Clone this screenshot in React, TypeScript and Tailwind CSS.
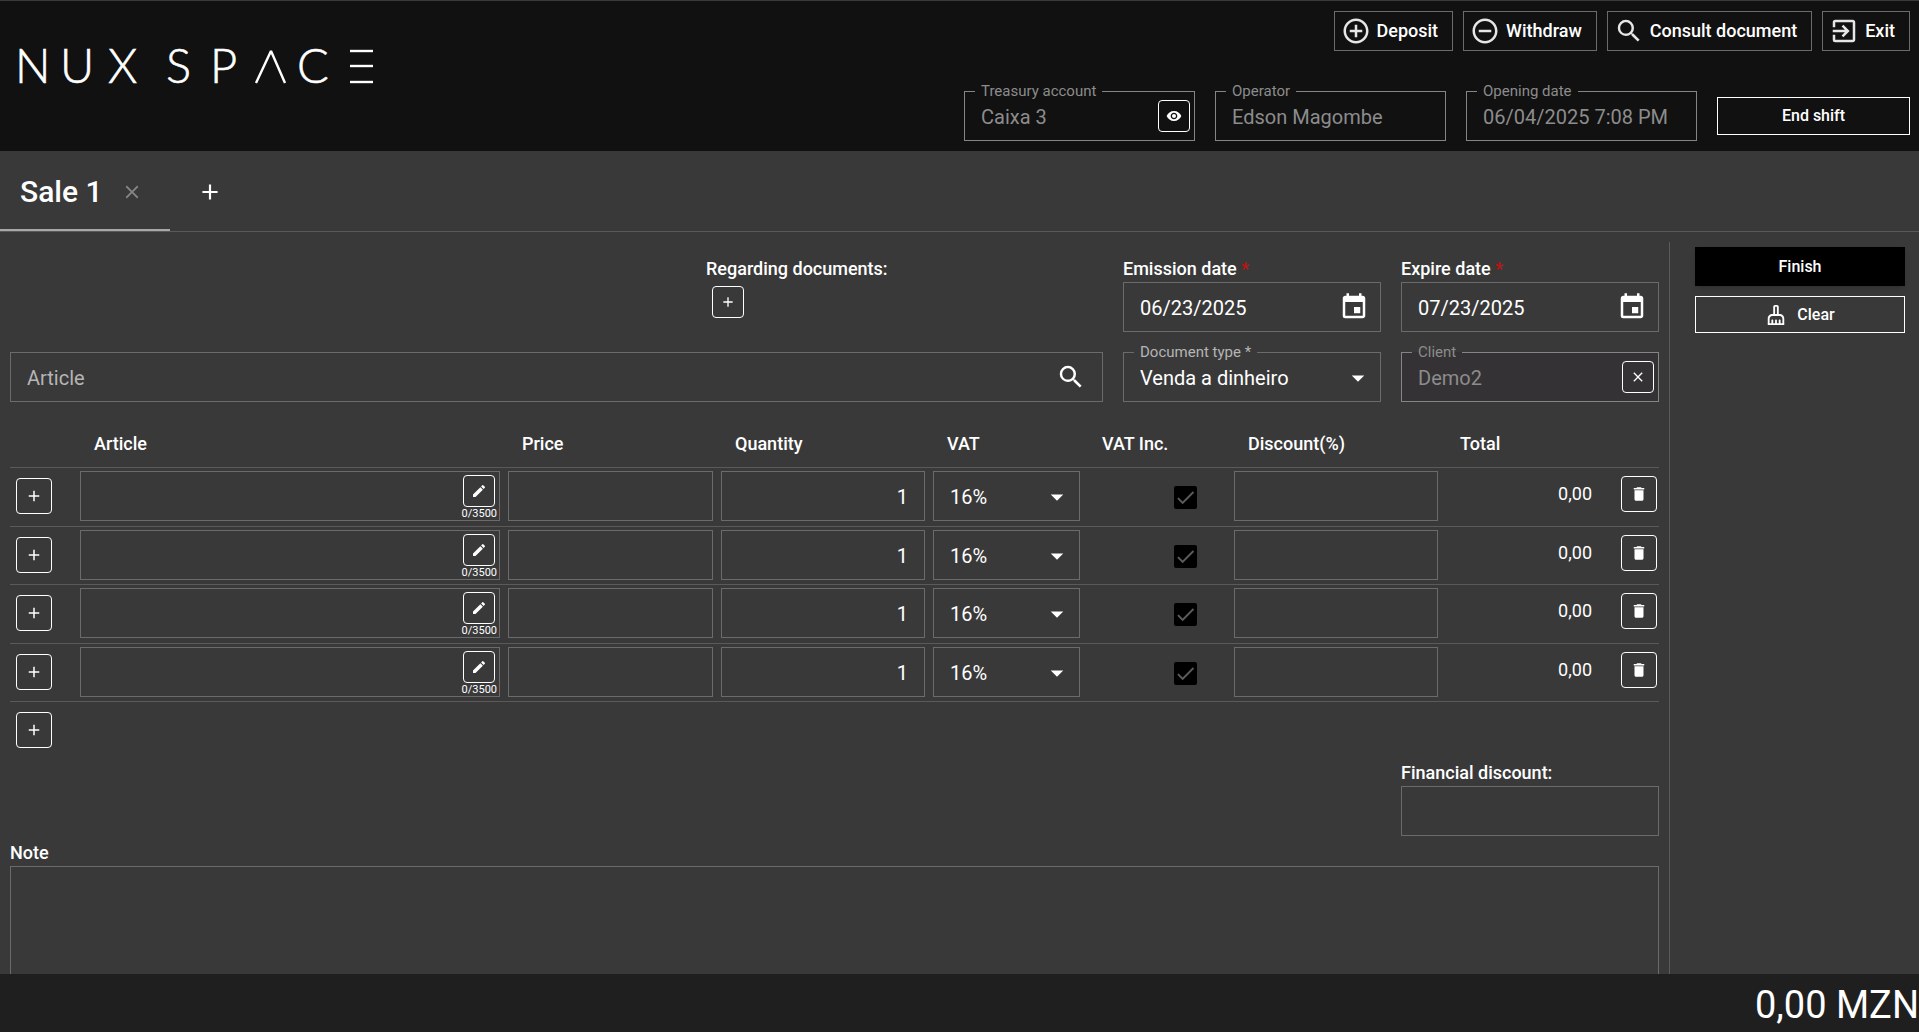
import { useId } from "react";
import {
  MdAdd,
  MdAddCircleOutline,
  MdArrowDropDown,
  MdCheck,
  MdClose,
  MdDelete,
  MdEdit,
  MdEvent,
  MdExitToApp,
  MdOutlineCleaningServices,
  MdRemoveCircleOutline,
  MdRemoveRedEye,
  MdSearch,
} from "react-icons/md";

const lines = [1, 2, 3, 4];

const boxClass = "block h-[50px] w-full rounded-none border border-[#6b6b6b] bg-transparent px-4 pt-0.5 text-xl text-white outline-none";

function Logo() {
  return (
    <svg role="img" aria-label="NUX SPACE" width="370" height="72" viewBox="0 0 370 72" fill="#fff" stroke="#fff" fontFamily="Lato, sans-serif" fontWeight="300" fontSize="47">
      <g strokeWidth="0.6">
        <text y="52" x="3">N</text>
        <text y="52" x="48">U</text>
        <text y="52" x="96">X</text>
        <text y="52" x="154">S</text>
        <text y="52" x="198">P</text>
        <text y="52" x="285">C</text>
      </g>
      <g strokeWidth="2.4" fill="none">
        <polyline points="244,52 259,20 273,52" strokeLinejoin="bevel" />
        <line x1="338" x2="361" y1="20" y2="20" />
        <line x1="338" x2="361" y1="35" y2="35" />
        <line x1="338" x2="361" y1="51" y2="51" />
      </g>
    </svg>
  );
}

type HeaderButtonProps = { icon: React.ReactNode; children: React.ReactNode };

function HeaderButton({ icon, children }: HeaderButtonProps) {
  return (
    <button type="button" className="flex h-10 items-center gap-1.5 border border-[#6b6b6b] pr-3.5 pl-1.5 text-lg font-medium text-white">
      <span className="text-[30px] text-[#e6e6e6]">{icon}</span>
      {children}
    </button>
  );
}

type IconButtonProps = { label: string; small?: boolean; children: React.ReactNode };

function IconButton({ label, small, children }: IconButtonProps) {
  return (
    <button
      type="button"
      aria-label={label}
      className={
        small
          ? "flex h-8 w-8 shrink-0 items-center justify-center rounded-[4px] border border-white text-base text-white"
          : "flex h-9 w-9 shrink-0 items-center justify-center rounded-[4px] border border-white text-lg text-white"
      }
    >
      {children}
    </button>
  );
}

type ReadonlyFieldProps = { label: string; value: string; dark?: boolean; action?: React.ReactNode };

function ReadonlyField({ label, value, dark, action }: ReadonlyFieldProps) {
  const id = useId();
  return (
    <div className="relative">
      <label
        htmlFor={id}
        className={`absolute -top-2 left-[11px] px-1.5 text-[15px] leading-4 text-[#8c8c8c] ${dark ? "bg-[#111111]" : "bg-linear-to-b from-[#3a393a] from-50% to-[#343234] to-50%"}`}
      >
        {label}
      </label>
      <input
        id={id}
        readOnly
        value={value}
        className={`block h-[50px] w-full border border-[#858585] px-4 pt-0.5 text-xl text-[#8c8c8c] outline-none ${dark ? "bg-[#111111]" : "bg-[#343234]"}`}
      />
      {action ? <div className="absolute top-[9px] right-[5px]">{action}</div> : null}
    </div>
  );
}

function DateField({ label, value }: { label: string; value: string }) {
  const id = useId();
  return (
    <div>
      <label htmlFor={id} className="block text-lg leading-[26px] font-medium text-white">
        {label} <span className="text-[#c01414]">*</span>
      </label>
      <div className="relative">
        <input id={id} defaultValue={value} className={boxClass} />
        <button type="button" aria-label={`Pick ${label}`} className="absolute top-2.5 right-3 text-[30px] text-white">
          <MdEvent />
        </button>
      </div>
    </div>
  );
}

function DropArrow() {
  return <MdArrowDropDown className="pointer-events-none absolute top-[11px] right-2 text-[30px] text-white" />;
}

function SaleRow({ n }: { n: number }) {
  return (
    <tr className="h-[58px] border-b border-[#5a5a5a] align-top odd:h-[59px]">
      <td className="pt-2.5 pl-1.5">
        <IconButton label={`Add article to line ${n}`}>
          <MdAdd />
        </IconButton>
      </td>
      <td className="px-1 pt-[3px]">
        <div className="relative">
          <input aria-label={`Article ${n}`} className={boxClass} />
          <div className="absolute top-1 right-[3px] flex flex-col items-center">
            <IconButton label={`Edit description ${n}`} small>
              <MdEdit />
            </IconButton>
            <span className="text-[11px] leading-[13px] text-white">0/3500</span>
          </div>
        </div>
      </td>
      <td className="px-1 pt-[3px]">
        <input aria-label={`Price ${n}`} className={boxClass} />
      </td>
      <td className="px-1 pt-[3px]">
        <input aria-label={`Quantity ${n}`} defaultValue="1" className={`${boxClass} text-right`} />
      </td>
      <td className="px-1 pt-[3px]">
        <div className="relative">
          <select aria-label={`VAT ${n}`} className={`${boxClass} appearance-none`}>
            <option>16%</option>
          </select>
          <DropArrow />
        </div>
      </td>
      <td className="pt-[18px] pr-[33px]">
        <div className="relative ml-auto h-[23px] w-[23px]">
          <input type="checkbox" defaultChecked aria-label={`VAT included ${n}`} className="block h-full w-full appearance-none rounded-[2px] bg-black" />
          <MdCheck className="pointer-events-none absolute inset-0 text-[23px] text-[#5c5c5c]" />
        </div>
      </td>
      <td className="px-1 pt-[3px]">
        <input aria-label={`Discount ${n}`} className={boxClass} />
      </td>
      <td className="pt-3 pr-[23px] text-right text-lg text-white">0,00</td>
      <td className="pt-2 pl-1.5">
        <IconButton label={`Delete line ${n}`}>
          <MdDelete />
        </IconButton>
      </td>
    </tr>
  );
}

export default function App() {
  return (
    <div className="flex h-screen flex-col overflow-hidden bg-[#3a393a] font-['Roboto',sans-serif] text-white">
      <header className="flex h-[151px] shrink-0 items-start justify-between border-t border-[#3a3a3a] bg-[#111111] pr-[9px] pl-3">
        <div className="pt-[30px]">
          <Logo />
        </div>
        <div className="flex flex-col items-end pt-2.5">
          <div className="flex gap-2.5">
            <HeaderButton icon={<MdAddCircleOutline />}>Deposit</HeaderButton>
            <HeaderButton icon={<MdRemoveCircleOutline />}>Withdraw</HeaderButton>
            <HeaderButton icon={<MdSearch />}>Consult document</HeaderButton>
            <HeaderButton icon={<MdExitToApp />}>Exit</HeaderButton>
          </div>
          <div className="mt-10 grid grid-cols-[231px_231px_231px_193px] items-center gap-5">
            <ReadonlyField
              label="Treasury account"
              value="Caixa 3"
              dark
              action={
                <IconButton label="View account" small>
                  <MdRemoveRedEye />
                </IconButton>
              }
            />
            <ReadonlyField label="Operator" value="Edson Magombe" dark />
            <ReadonlyField label="Opening date" value="06/04/2025 7:08 PM" dark />
            <button type="button" className="h-[38px] border border-white text-base font-medium text-white">
              End shift
            </button>
          </div>
        </div>
      </header>

      <nav className="flex h-[81px] shrink-0 items-stretch border-b border-[#5a5a5a]">
        <div className="flex w-[170px] items-center gap-[18px] border-b-2 border-[#a8a8a8] pt-1 pl-5">
          <button type="button" className="text-3xl font-medium text-white">
            Sale 1
          </button>
          <button type="button" aria-label="Close Sale 1" className="text-[22px] text-[#858585]">
            <MdClose />
          </button>
        </div>
        <button type="button" aria-label="New sale" className="ml-[27px] pt-0.5 text-[26px] text-white">
          <MdAdd />
        </button>
      </nav>

      <div className="flex min-h-0 flex-1">
        <main className="min-w-0 flex-1 overflow-hidden px-2.5 pt-6">
          <div className="grid grid-cols-[1fr_258px_258px] gap-5">
            <div className="ml-auto w-[397px]">
              <div className="text-lg leading-[26px] font-medium">Regarding documents:</div>
              <div className="pt-1 pl-1.5">
                <IconButton label="Add document" small>
                  <MdAdd />
                </IconButton>
              </div>
            </div>
            <DateField label="Emission date" value="06/23/2025" />
            <DateField label="Expire date" value="07/23/2025" />
            <div className="relative">
              <input aria-label="Article" placeholder="Article" className={`${boxClass} placeholder:text-[#b5b5b5]`} />
              <button type="button" aria-label="Search article" className="absolute top-2.5 right-[17px] text-[30px] text-white">
                <MdSearch />
              </button>
            </div>
            <div className="relative">
              <label htmlFor="doc-type" className="absolute -top-2 left-[11px] bg-[#3a393a] px-1.5 text-[15px] leading-4 text-[#b5b5b5]">
                Document type *
              </label>
              <select id="doc-type" className={`${boxClass} appearance-none`}>
                <option>Venda a dinheiro</option>
              </select>
              <DropArrow />
            </div>
            <ReadonlyField
              label="Client"
              value="Demo2"
              action={
                <IconButton label="Remove client" small>
                  <MdClose />
                </IconButton>
              }
            />
          </div>

          <table className="mt-5 w-full table-fixed border-collapse">
            <colgroup>
              <col className="w-[66px]" />
              <col />
              <col className="w-[213px]" />
              <col className="w-[212px]" />
              <col className="w-[155px]" />
              <col className="w-[146px]" />
              <col className="w-[212px]" />
              <col className="w-[173px]" />
              <col className="w-[44px]" />
            </colgroup>
            <thead>
              <tr className="h-[45px] border-b border-[#5a5a5a] text-left text-lg">
                <td />
                <th className="px-[18px] font-medium">Article</th>
                <th className="px-[18px] font-medium">Price</th>
                <th className="px-[18px] font-medium">Quantity</th>
                <th className="px-[18px] font-medium">VAT</th>
                <th className="px-[18px] font-medium">VAT Inc.</th>
                <th className="px-[18px] font-medium">Discount(%)</th>
                <th className="px-[18px] font-medium">Total</th>
                <td />
              </tr>
            </thead>
            <tbody>
              {lines.map((n) => (
                <SaleRow key={n} n={n} />
              ))}
            </tbody>
          </table>

          <div className="pt-2.5 pl-1.5">
            <IconButton label="Add line">
              <MdAdd />
            </IconButton>
          </div>

          <div className="mt-3 ml-auto w-[258px]">
            <label htmlFor="fin-discount" className="block text-lg leading-[26px] font-medium">
              Financial discount:
            </label>
            <input id="fin-discount" className={boxClass} />
          </div>

          <label htmlFor="note" className="mt-1 block text-lg leading-[26px] font-medium">
            Note
          </label>
          <textarea id="note" className="block h-40 w-full resize-none border border-[#6b6b6b] bg-transparent p-4 text-xl outline-none" />
        </main>

        <aside className="mt-2.5 flex w-[250px] shrink-0 flex-col gap-2.5 border-l border-[#5a5a5a] pt-[5px] pr-3.5 pl-[25px]">
          <button type="button" className="h-[39px] bg-black text-base font-medium text-white shadow-md">
            Finish
          </button>
          <button type="button" className="flex h-[37px] items-center justify-center gap-2.5 border border-white text-base font-medium text-white">
            <MdOutlineCleaningServices className="text-[22px]" />
            Clear
          </button>
        </aside>
      </div>

      <footer className="flex h-[58px] shrink-0 items-center justify-end bg-[#201f20] pt-1 text-[38px] leading-none">0,00 MZN</footer>
    </div>
  );
}
